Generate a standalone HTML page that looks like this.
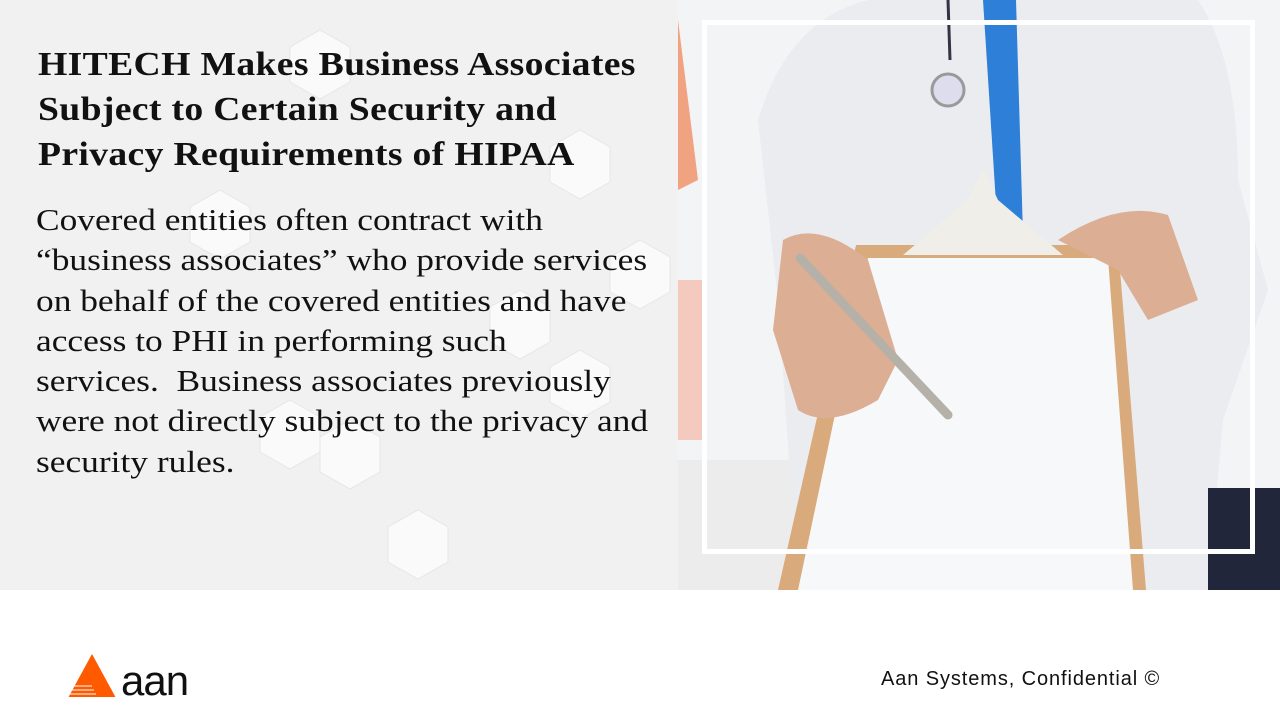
<!DOCTYPE html>
<html><head><style>
body{margin:0;width:1280px;height:720px;overflow:hidden;background:#fff;position:relative;font-family:"Liberation Serif",serif}
.left{position:absolute;left:0;top:0;width:678px;height:590px;background:#f1f1f1}
h1{position:absolute;left:38px;top:42px;margin:0;font-size:34px;line-height:45px;font-weight:bold;color:#111;letter-spacing:0.3px;transform:scaleX(1.108);transform-origin:0 0;white-space:nowrap}
p{position:absolute;left:36px;top:200px;margin:0;font-size:30.5px;line-height:40.3px;color:#111;transform:scaleX(1.16);transform-origin:0 0;white-space:nowrap}
.foot{position:absolute;left:881px;top:668px;font-family:"Liberation Sans",sans-serif;font-size:20px;color:#111;letter-spacing:0.9px}
</style></head><body>
<div class="left">
<svg width="678" height="590" style="position:absolute;left:0;top:0">
<g fill="#fafafa" stroke="#e6e6e6" stroke-width="1">
<polygon points="320,30 350,47 350,82 320,99 290,82 290,47"/>
<polygon points="580,130 610,147 610,182 580,199 550,182 550,147"/>
<polygon points="220,190 250,207 250,242 220,259 190,242 190,207"/>
<polygon points="640,240 670,257 670,292 640,309 610,292 610,257"/>
<polygon points="580,350 610,367 610,402 580,419 550,402 550,367"/>
<polygon points="290,400 320,417 320,452 290,469 260,452 260,417"/>
<polygon points="350,420 380,437 380,472 350,489 320,472 320,437"/>
<polygon points="418,510 448,527 448,562 418,579 388,562 388,527"/>
<polygon points="520,290 550,307 550,342 520,359 490,342 490,307"/>
</g></svg>
<h1>HITECH Makes Business Associates<br>Subject to Certain Security and<br>Privacy Requirements of HIPAA</h1>
<p>Covered entities often contract with<br>“business associates” who provide services<br>on behalf of the covered entities and have<br>access to PHI in performing such<br>services.&nbsp; Business associates previously<br>were not directly subject to the privacy and<br>security rules.</p>
</div>
<svg width="602" height="590" style="position:absolute;left:678px;top:0">
<rect width="602" height="590" fill="#f3f4f6"/>
<polygon points="0,20 20,180 0,190" fill="#f08050" opacity="0.7"/>
<rect x="0" y="280" width="25" height="160" fill="#f4b8a8" opacity="0.7"/>
<rect x="0" y="460" width="120" height="130" fill="#ececec"/>
<path d="M80,120 Q110,20 190,0 L520,0 Q560,60 560,180 L590,290 L545,420 L530,590 L120,590 L100,300 Z" fill="#eaecf0"/>
<polygon points="305,0 338,0 345,235 320,235" fill="#2d7fd8"/>
<path d="M270,0 L272,60" stroke="#334" stroke-width="3"/>
<circle cx="270" cy="90" r="16" fill="#dde" stroke="#999" stroke-width="3"/>
<rect x="530" y="488" width="72" height="102" fill="#22263a"/>
<polygon points="178,245 440,245 468,590 100,590" fill="#d8aa7c"/>
<polygon points="190,258 430,258 455,590 120,590" fill="#f7f8fa"/>
<path d="M225,255 L290,200 L305,168 L320,200 L385,255 Z" fill="#f0eee8"/>
<path d="M105,240 Q140,220 190,260 L220,360 L200,400 Q150,430 120,410 L95,330 Z" fill="#dcae94"/>
<path d="M380,240 Q440,200 490,215 L520,300 L470,320 L440,270 Z" fill="#dcae94"/>
<path d="M122,258 L270,415" stroke="#b5b0a8" stroke-width="9" stroke-linecap="round"/>
<rect x="26.5" y="22.5" width="548" height="529" fill="none" stroke="#fff" stroke-width="5"/>
</svg>
<svg width="125" height="45" style="position:absolute;left:66px;top:652px">
<polygon points="26,2 50,46 2,46" fill="#ff5a00"/>
<g stroke="#fff" stroke-width="1"><line x1="8" y1="34" x2="26" y2="34"/><line x1="6" y1="38" x2="28" y2="38"/><line x1="4" y1="42" x2="30" y2="42"/></g>
<text x="55" y="43" font-family="Liberation Sans,sans-serif" font-size="42" fill="#111" letter-spacing="-1">aan</text>
</svg>
<div class="foot">Aan Systems, Confidential ©</div>
</body></html>
